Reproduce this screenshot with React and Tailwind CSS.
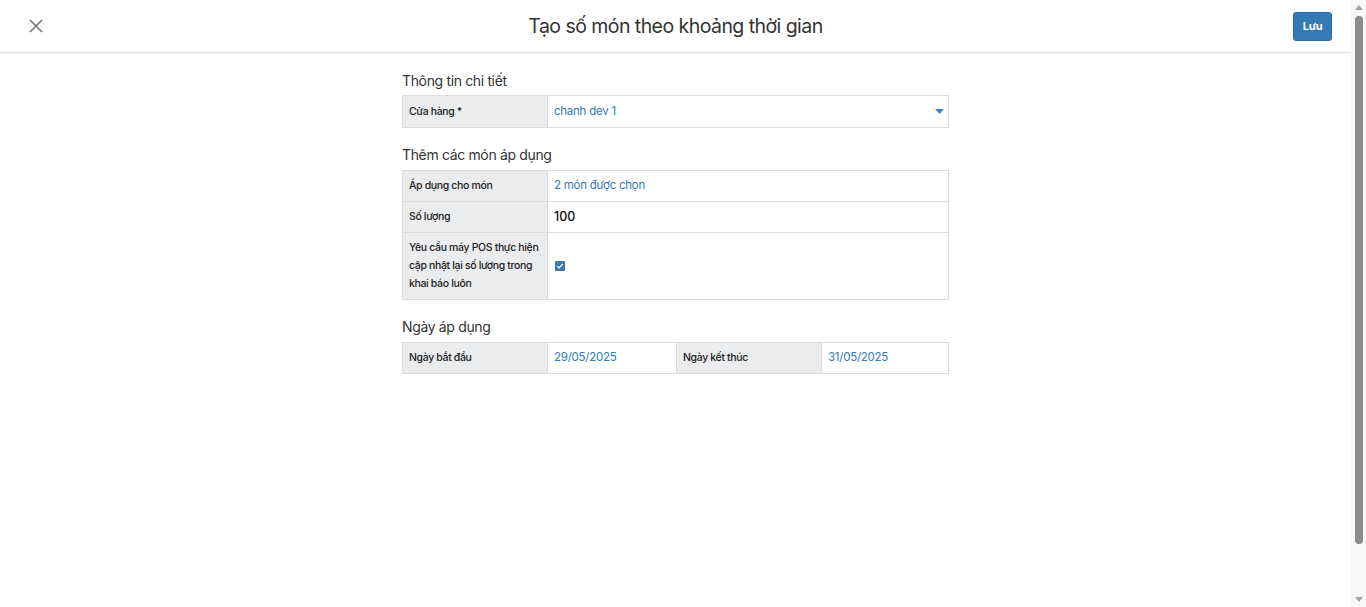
import React from "react";

function Label({ children, className = "" }) {
  return (
    <div className={`bg-[#ebecee] text-[10.5px] font-medium tracking-[-0.35px] text-[#222] px-[6px] flex items-center ${className}`}>
      {children}
    </div>
  );
}

function Value({ children, className = "" }) {
  return (
    <div className={`flex items-center pl-[6px] text-[11.5px] tracking-[-0.25px] text-[#337ab7] ${className}`}>
      {children}
    </div>
  );
}

function Scrollbar() {
  return (
    <div className="w-[15px] h-[607px] bg-[#f8f8f8] flex flex-col items-center">
      <div className="h-[15px] flex items-center justify-center">
        <svg width="8" height="5" viewBox="0 0 8 5"><path d="M0 5 L4 0 L8 5 Z" fill="#a3a3a3" /></svg>
      </div>
      <div className="w-[8px] h-[528px] rounded-full bg-[#8a8a8a] mt-[1px]" />
      <div className="flex-1" />
      <div className="h-[15px] flex items-center justify-center">
        <svg width="8" height="5" viewBox="0 0 8 5"><path d="M0 0 L8 0 L4 5 Z" fill="#a3a3a3" /></svg>
      </div>
    </div>
  );
}

export default function App() {
  return (
    <div className="flex h-[607px] overflow-hidden bg-white text-[#333]" style={{ fontFamily: "Inter, 'Noto Sans', sans-serif" }}>
      <div className="flex-1 min-w-0">
        <header className="h-[53px] border-b border-[#e3e3e3] shadow-[0_1px_2px_rgba(0,0,0,0.06)] grid grid-cols-[1fr_auto_1fr] items-center px-[19px]">
          <div className="flex items-center pl-[9px]">
            <button className="w-[16px] h-[16px] flex items-center justify-center">
              <svg width="14" height="14" viewBox="0 0 14 14">
                <path d="M1 1 L13 13 M13 1 L1 13" stroke="#7a7a7a" strokeWidth="1.7" />
              </svg>
            </button>
          </div>
          <h1 className="text-[19.5px] font-normal text-[#333] tracking-[-0.55px] mt-[1px]">Tạo số món theo khoảng thời gian</h1>
          <div className="flex justify-end">
            <button className="h-[29px] w-[39px] rounded-[3px] bg-[#337ab7] border border-[#2e6da4] text-white text-[11px] font-bold tracking-[-0.3px] mt-[1px]">
              Lưu
            </button>
          </div>
        </header>

        <main className="w-[547px] mx-auto pt-[18px]">
          <h2 className="text-[14px] tracking-[-0.35px] leading-[20px] text-[#333] mb-[4px]">Thông tin chi tiết</h2>
          <div className="border border-[#dcdcdc] grid grid-cols-[145px_1fr] h-[33px]">
            <Label className="border-r border-[#dcdcdc]">Cửa hàng *</Label>
            <div className="flex items-center justify-between pl-[6px] pr-[4px] text-[11.5px] tracking-[-0.25px] text-[#337ab7]">
              <span>chanh dev 1</span>
              <svg width="9" height="5" viewBox="0 0 9 5">
                <path d="M0 0 L9 0 L4.5 5 Z" fill="#3b82c4" />
              </svg>
            </div>
          </div>

          <h2 className="text-[14px] tracking-[-0.35px] leading-[20px] text-[#333] mt-[17px] mb-[5px]">Thêm các món áp dụng</h2>
          <div className="border border-[#dcdcdc] grid grid-cols-[145px_1fr]">
            <Label className="border-r border-b border-[#dcdcdc] h-[31px]">Áp dụng cho món</Label>
            <Value className="border-b border-[#dcdcdc]">2 món được chọn</Value>
            <Label className="border-r border-b border-[#dcdcdc] h-[31px]">Số lượng</Label>
            <div className="border-b border-[#dcdcdc] flex items-center pl-[6px] text-[12.5px] font-medium text-[#111]">100</div>
            <Label className="border-r border-[#dcdcdc] h-[66px] leading-[18px]">
              <span className="whitespace-nowrap">Yêu cầu máy POS thực hiện<br />cập nhật lại số lượng trong<br />khai báo luôn</span>
            </Label>
            <div className="flex items-center pl-[7px]">
              <span className="w-[10px] h-[10px] rounded-[1px] bg-[#3f78b0] flex items-center justify-center">
                <svg width="8" height="8" viewBox="0 0 8 8">
                  <path d="M1.3 4.2 L3.2 5.9 L6.7 2.1" stroke="white" strokeWidth="1.3" fill="none" />
                </svg>
              </span>
            </div>
          </div>

          <h2 className="text-[14px] tracking-[-0.35px] leading-[20px] text-[#333] mt-[17px] mb-[5px]">Ngày áp dụng</h2>
          <div className="border border-[#dcdcdc] grid grid-cols-[145px_129px_145px_1fr] h-[32px]">
            <Label className="border-r border-[#dcdcdc]">Ngày bắt đầu</Label>
            <Value className="border-r border-[#dcdcdc]">29/05/2025</Value>
            <Label className="border-r border-[#dcdcdc]">Ngày kết thúc</Label>
            <Value>31/05/2025</Value>
          </div>
        </main>
      </div>
      <Scrollbar />
    </div>
  );
}
